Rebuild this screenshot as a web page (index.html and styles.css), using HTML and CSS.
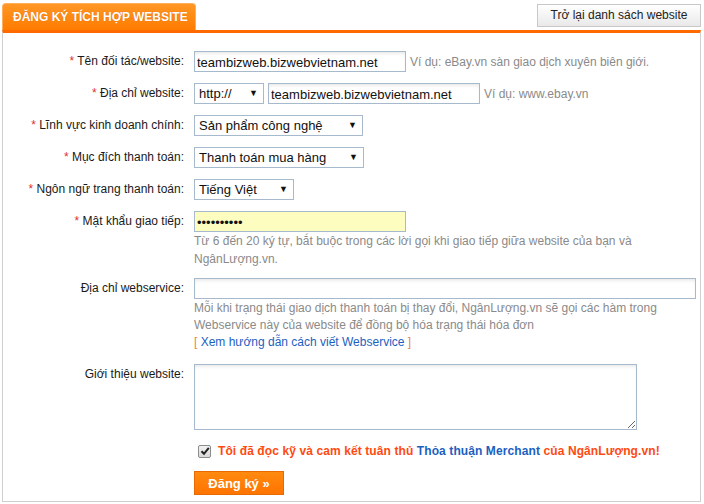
FILE: index.html
```html
<!DOCTYPE html>
<html lang="vi">
<head>
<meta charset="utf-8">
<title>Đăng ký tích hợp website</title>
<link rel="stylesheet" href="styles.css">
</head>
<body>
<div class="wrap">
  <div class="head">
    <div class="tab">ĐĂNG KÝ TÍCH HỢP WEBSITE</div>
    <a class="back" href="#">Trở lại danh sách website</a>
  </div>
  <form class="panel">
    <div class="row">
      <label class="lbl"><span class="req">*</span> Tên đối tác/website:</label>
      <div class="field inline">
        <input class="txt w211" type="text" value="teambizweb.bizwebvietnam.net">
        <span class="hint">Ví dụ: eBay.vn sàn giao dịch xuyên biên giới.</span>
      </div>
    </div>
    <div class="row">
      <label class="lbl"><span class="req">*</span> Địa chỉ website:</label>
      <div class="field inline">
        <div class="sel w70"><span>http://</span></div>
        <input class="txt w211" type="text" value="teambizweb.bizwebvietnam.net">
        <span class="hint">Ví dụ: www.ebay.vn</span>
      </div>
    </div>
    <div class="row">
      <label class="lbl"><span class="req">*</span> Lĩnh vực kinh doanh chính:</label>
      <div class="field inline">
        <div class="sel w168"><span>Sản phẩm công nghệ</span></div>
      </div>
    </div>
    <div class="row">
      <label class="lbl"><span class="req">*</span> Mục đích thanh toán:</label>
      <div class="field inline">
        <div class="sel w170"><span>Thanh toán mua hàng</span></div>
      </div>
    </div>
    <div class="row">
      <label class="lbl"><span class="req">*</span> Ngôn ngữ trang thanh toán:</label>
      <div class="field inline">
        <div class="sel w100"><span>Tiếng Việt</span></div>
      </div>
    </div>
    <div class="row r-pw">
      <label class="lbl"><span class="req">*</span> Mật khẩu giao tiếp:</label>
      <div class="field">
        <input class="txt w211 pw" type="password" value="1234567890">
        <div class="note n18">Từ 6 đến 20 ký tự, bắt buộc trong các lời gọi khi giao tiếp giữa website của bạn và NgânLượng.vn.</div>
      </div>
    </div>
    <div class="row r-ws">
      <label class="lbl">Địa chỉ webservice:</label>
      <div class="field">
        <input class="txt wfull" type="text" value="">
        <div class="note n17">Mỗi khi trạng thái giao dịch thanh toán bị thay đổi, NgânLượng.vn sẽ gọi các hàm trong Webservice này của website để đồng bộ hóa trạng thái hóa đơn<br><span class="br">[</span> <a class="link" href="#">Xem hướng dẫn cách viết Webservice</a> <span class="br">]</span></div>
      </div>
    </div>
    <div class="row r-intro">
      <label class="lbl">Giới thiệu website:</label>
      <div class="field">
        <textarea class="area"></textarea>
      </div>
    </div>
    <div class="row r-check">
      <span></span>
      <div class="field">
        <label class="agree"><span class="box"><svg width="10" height="10" viewBox="0 0 10 10"><path d="M1.5 5.2 L4 7.8 L8.8 1.8" fill="none" stroke="#222" stroke-width="2"/></svg></span><span class="agree-text">Tôi đã đọc kỹ và cam kết tuân thủ <span class="blue">Thỏa thuận Merchant</span> của NgânLượng.vn!</span></label>
      </div>
    </div>
    <div class="row r-btn">
      <span></span>
      <div class="field">
        <button class="submit" type="button">Đăng ký »</button>
      </div>
    </div>
  </form>
</div>
</body>
</html>
```
FILE: styles.css
```css
* { box-sizing: border-box; }
html, body { margin: 0; padding: 0; background: #fff; }
body {
  font-family: "Liberation Sans", Arial, sans-serif;
  font-size: 12px;
  color: #222;
  width: 704px;
  height: 504px;
  overflow: hidden;
}
.wrap { padding: 0 2px 0 2px; width: 703px; }
.head {
  display: flex;
  justify-content: space-between;
  align-items: flex-end;
  height: 30px;
}
.tab {
  width: 194px;
  height: 27px;
  border: 1px solid #ffae5c;
  border-bottom: none;
  border-radius: 4px 4px 0 0;
  background: linear-gradient(#ff9726, #ff7c00);
  color: #fff;
  font-weight: bold;
  font-size: 12px;
  line-height: 27px;
  padding-left: 10px;
  text-shadow: 0 0 1px #d06000;
}
.back {
  align-self: flex-start;
  margin-top: 4px;
  height: 23px;
  width: 164px;
  border: 1px solid #c8c8c8;
  background: linear-gradient(#ffffff, #e9e9e9);
  color: #222;
  text-decoration: none;
  text-align: center;
  line-height: 21px;
  font-size: 12px;
}
.panel {
  border-top: 3px solid #ff6a00;
  border-left: 1px solid #cfcfcf;
  border-right: 1px solid #cfcfcf;
  border-bottom: 1px solid #cfcfcf;
  padding: 18px 0 7px 0;
  height: 472px;
}
.row {
  display: grid;
  grid-template-columns: 181px 1fr;
  column-gap: 10px;
  margin-bottom: 11px;
}
.lbl {
  text-align: right;
  line-height: 21px;
  font-size: 12px;
  color: #1a1a1a;
  white-space: nowrap;
}
.req { color: #e03030; }
.field.inline { display: flex; align-items: center; gap: 4px; }
.txt {
  height: 21px;
  border: 1px solid #a7bacd;
  font-family: "Liberation Sans", Arial, sans-serif;
  font-size: 13px;
  color: #111;
  padding: 1px 2px 0 2px;
  background: #fff;
  box-shadow: inset 0 3px 4px -2px rgba(0,0,0,0.12);
  outline: none;
  display: block;
}
.w211 { width: 212px; }
.wfull { width: 502px; }
.pw { background: #fdfdbf; box-shadow: none; letter-spacing: 0; }
.hint { color: #8a8a8a; font-size: 12px; margin-left: 0; white-space: nowrap; }
.sel {
  position: relative;
  height: 21px;
  border: 1px solid #a7bacd;
  background: #fff;
  font-size: 13px;
  line-height: 19px;
  padding-left: 4px;
  color: #111;
}
.sel::after {
  content: "▼";
  position: absolute;
  right: 5px;
  top: 0;
  font-size: 9px;
  line-height: 19px;
  color: #111;
}
.w70 { width: 70px; }
.w168 { width: 169px; }
.w170 { width: 170px; }
.w100 { width: 100px; }
.note { color: #8a8a8a; font-size: 12px; }
.n18 { line-height: 18px; width: 480px; margin-top: 0; }
.n17 { line-height: 17px; margin-top: 1px; width: 502px; }
.r-pw { margin-bottom: 10px; }
.r-ws { margin-bottom: 13px; }
.link { color: #1c5fc0; text-decoration: none; }
.br { color: #e9834a; }
.area {
  display: block;
  width: 443px;
  height: 66px;
  border: 1px solid #a7bacd;
  box-shadow: inset 0 3px 4px -2px rgba(0,0,0,0.12);
  outline: none;
}
.r-intro { margin-bottom: 11px; }
.r-check { margin-bottom: 10px; }
.agree {
  display: flex;
  align-items: center;
  height: 20px;
  font-weight: bold;
  color: #ff4a10;
  font-size: 12px;
  white-space: nowrap;
  padding-left: 4px;
  letter-spacing: 0.1px;
}
.box {
  width: 13px;
  height: 13px;
  border: 1px solid #8c8c8c;
  border-radius: 2px;
  background: linear-gradient(#f2f2f2, #d8d8d8);
  display: inline-flex;
  align-items: center;
  justify-content: center;
  margin-right: 7px;
}
.blue { color: #1c5fc0; }
.submit {
  width: 90px;
  height: 24px;
  border: 1px solid #e86a00;
  background: linear-gradient(#ff8a10, #ff7400);
  color: #fff;
  font-family: "Liberation Sans", Arial, sans-serif;
  font-weight: bold;
  font-size: 13px;
  padding: 0;
  cursor: pointer;
}
```
